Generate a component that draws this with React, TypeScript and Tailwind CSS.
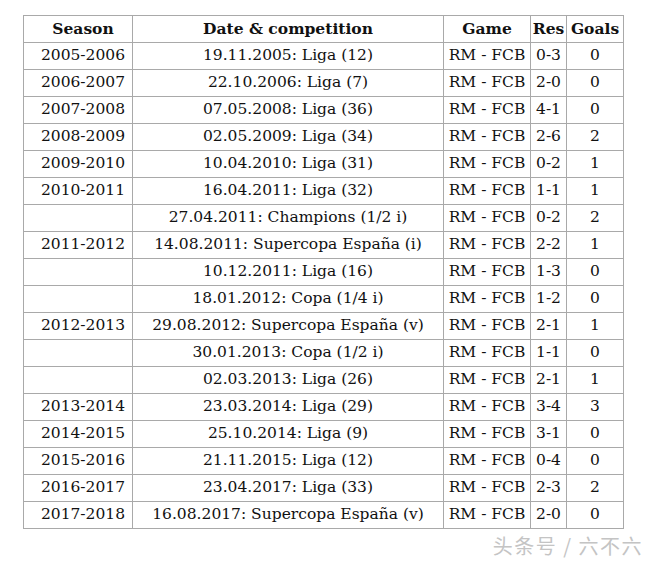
const rows: [string, string, string, string, string][] = [
  ['2005-2006', '19.11.2005: Liga (12)', 'RM - FCB', '0-3', '0'],
  ['2006-2007', '22.10.2006: Liga (7)', 'RM - FCB', '2-0', '0'],
  ['2007-2008', '07.05.2008: Liga (36)', 'RM - FCB', '4-1', '0'],
  ['2008-2009', '02.05.2009: Liga (34)', 'RM - FCB', '2-6', '2'],
  ['2009-2010', '10.04.2010: Liga (31)', 'RM - FCB', '0-2', '1'],
  ['2010-2011', '16.04.2011: Liga (32)', 'RM - FCB', '1-1', '1'],
  ['', '27.04.2011: Champions (1/2 i)', 'RM - FCB', '0-2', '2'],
  ['2011-2012', '14.08.2011: Supercopa España (i)', 'RM - FCB', '2-2', '1'],
  ['', '10.12.2011: Liga (16)', 'RM - FCB', '1-3', '0'],
  ['', '18.01.2012: Copa (1/4 i)', 'RM - FCB', '1-2', '0'],
  ['2012-2013', '29.08.2012: Supercopa España (v)', 'RM - FCB', '2-1', '1'],
  ['', '30.01.2013: Copa (1/2 i)', 'RM - FCB', '1-1', '0'],
  ['', '02.03.2013: Liga (26)', 'RM - FCB', '2-1', '1'],
  ['2013-2014', '23.03.2014: Liga (29)', 'RM - FCB', '3-4', '3'],
  ['2014-2015', '25.10.2014: Liga (9)', 'RM - FCB', '3-1', '0'],
  ['2015-2016', '21.11.2015: Liga (12)', 'RM - FCB', '0-4', '0'],
  ['2016-2017', '23.04.2017: Liga (33)', 'RM - FCB', '2-3', '2'],
  ['2017-2018', '16.08.2017: Supercopa España (v)', 'RM - FCB', '2-0', '0'],
];

const cell = 'border border-[#a9a9a9] h-[27px] p-0 text-center whitespace-nowrap';

export default function App() {
  return (
    <div className="w-[656px] h-[566px] bg-white text-[#111] font-['DejaVu_Serif',serif] text-[15.5px] leading-none">
      <div className="pt-[15px] pl-[23px]">
        <table className="table-fixed border-collapse w-[600px]">
          <colgroup>
            <col className="w-[109px]" />
            <col className="w-[311px]" />
            <col className="w-[87px]" />
            <col className="w-[36px]" />
            <col className="w-[57px]" />
          </colgroup>
          <thead>
            <tr className="font-bold">
              <th className={`${cell} pl-[10px]`}>Season</th>
              <th className={cell}>Date &amp; competition</th>
              <th className={cell}>Game</th>
              <th className={cell}>Res</th>
              <th className={cell}>Goals</th>
            </tr>
          </thead>
          <tbody>
            {rows.map((r, i) => (
              <tr key={i}>
                <td className={`${cell} pl-[10px]`}>{r[0]}</td>
                <td className={cell}>{r[1]}</td>
                <td className={cell}>{r[2]}</td>
                <td className={cell}>{r[3]}</td>
                <td className={cell}>{r[4]}</td>
              </tr>
            ))}
          </tbody>
        </table>
        {/* watermark */}
        <div className="flex justify-end pr-[13px] mt-[7px]">
          <span className="font-['Noto_Sans_CJK_SC',sans-serif] text-[20px] text-[#c4c4c4] tracking-[1.5px]">
            头条号 / 六不六
          </span>
        </div>
      </div>
    </div>
  );
}
